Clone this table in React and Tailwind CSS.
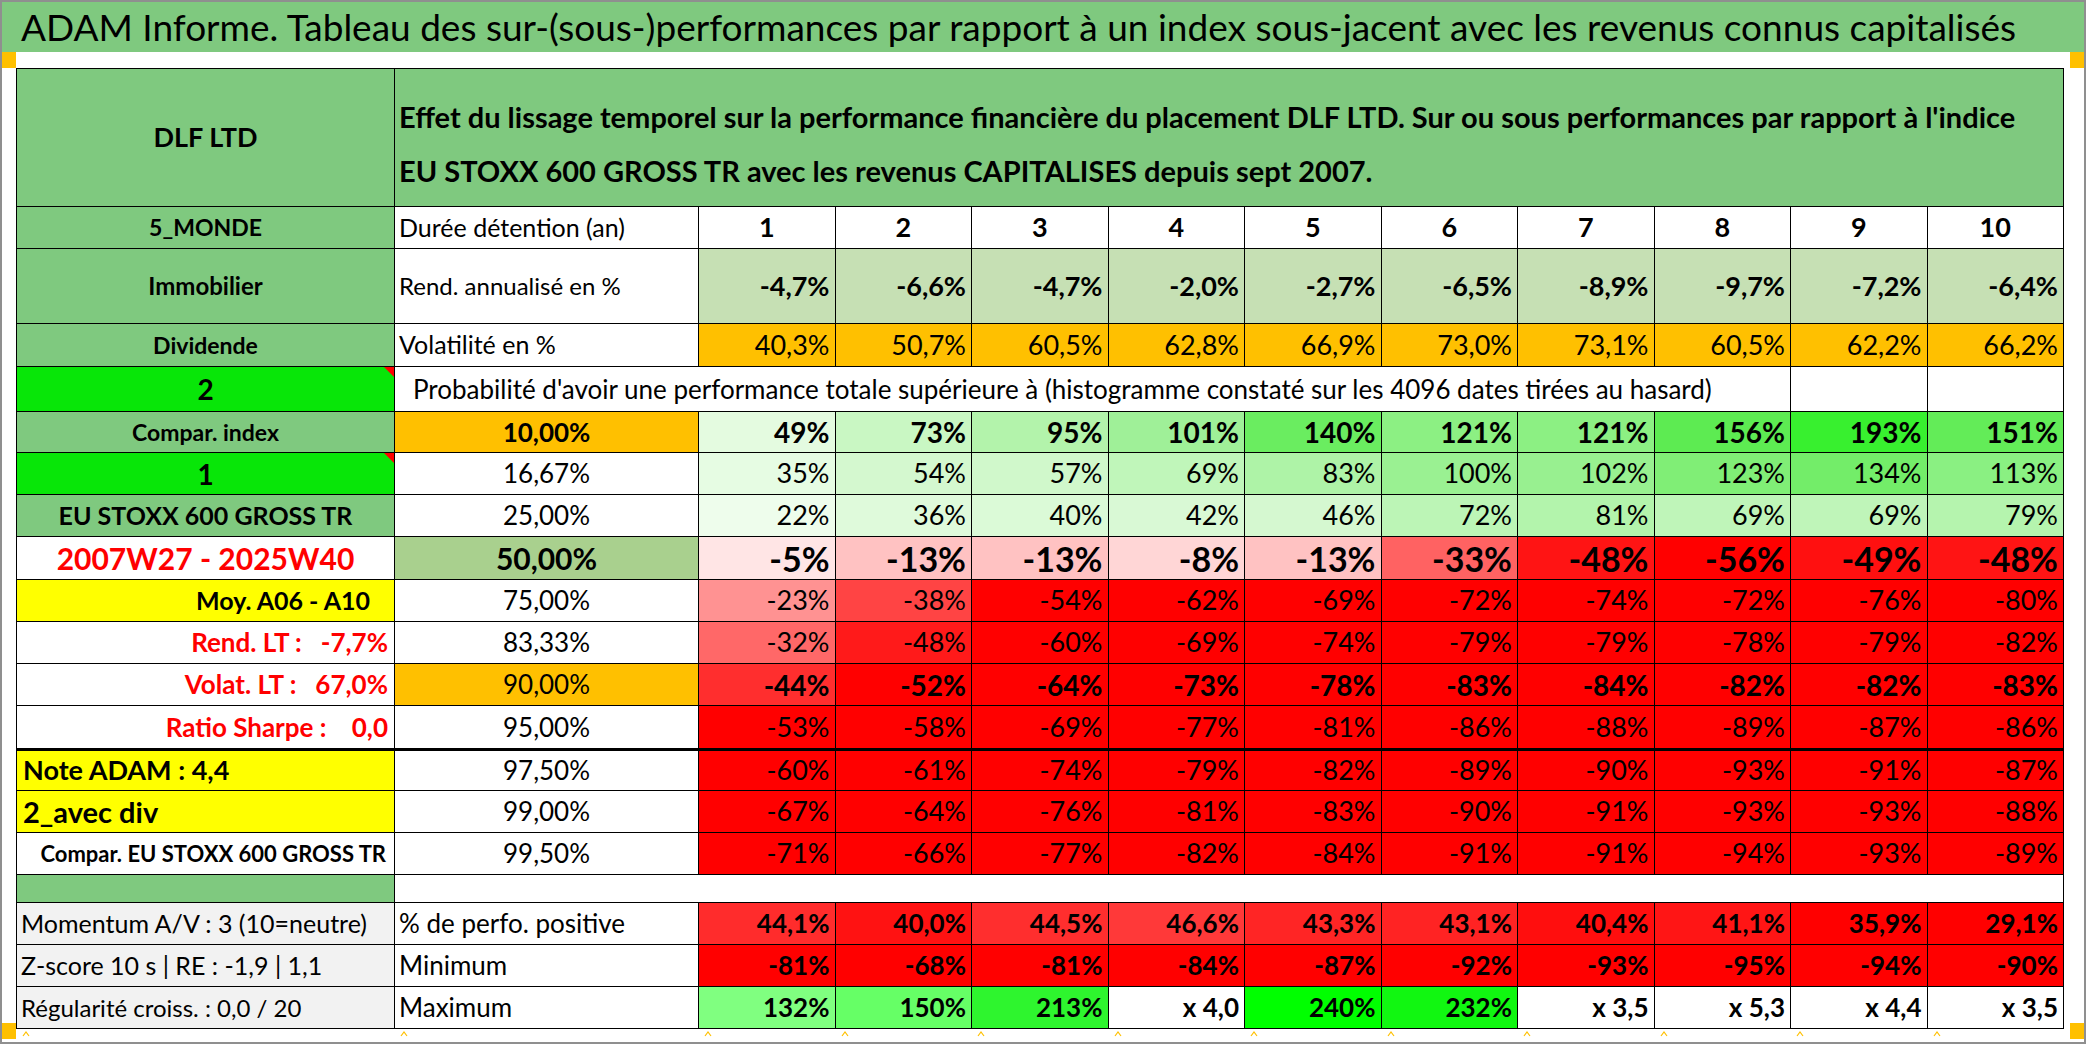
import { twMerge } from "tailwind-merge";

const RED = "bg-[#ff0000]";

// conditional formatting colours copied from the sheet
const rend = ["-4,7%", "-6,6%", "-4,7%", "-2,0%", "-2,7%", "-6,5%", "-8,9%", "-9,7%", "-7,2%", "-6,4%"];
const vola = ["40,3%", "50,7%", "60,5%", "62,8%", "66,9%", "73,0%", "73,1%", "60,5%", "62,2%", "66,2%"];

const rows = [
  {
    a: "Compar. index",
    aCls: "bg-[#7fc97f] justify-center font-bold text-[23px]",
    b: "10,00%",
    bCls: "bg-[#ffc000] font-bold",
    vCls: "font-bold text-[28px]",
    cells: [
      ["49%", "bg-[#e4fbe0]"], ["73%", "bg-[#c9f7c3]"], ["95%", "bg-[#b3f3ab]"], ["101%", "bg-[#9ff098]"], ["140%", "bg-[#6aed60]"],
      ["121%", "bg-[#8cf083]"], ["121%", "bg-[#8cf083]"], ["156%", "bg-[#5deb52]"], ["193%", "bg-[#38f02f]"], ["151%", "bg-[#63ec58]"],
    ],
  },
  {
    a: "1",
    aCls: "bg-[#08e608] justify-center font-bold text-[28px]",
    flag: true,
    b: "16,67%",
    cells: [
      ["35%", "bg-[#e6fce3]"], ["54%", "bg-[#d4f8cf]"], ["57%", "bg-[#d0f8cb]"], ["69%", "bg-[#c0f6ba]"], ["83%", "bg-[#aef3a7]"],
      ["100%", "bg-[#9af192]"], ["102%", "bg-[#98f090]"], ["123%", "bg-[#80ee76]"], ["134%", "bg-[#73ed69]"], ["113%", "bg-[#8af082]"],
    ],
  },
  {
    a: "EU STOXX 600 GROSS TR",
    aCls: "bg-[#7fc97f] justify-center font-bold text-[25px]",
    b: "25,00%",
    cells: [
      ["22%", "bg-[#eefdec]"], ["36%", "bg-[#dffadb]"], ["40%", "bg-[#dbfad7]"], ["42%", "bg-[#d9f9d5]"], ["46%", "bg-[#d5f8d0]"],
      ["72%", "bg-[#bcf5b6]"], ["81%", "bg-[#b3f4ac]"], ["69%", "bg-[#bff5b9]"], ["69%", "bg-[#bff5b9]"], ["79%", "bg-[#b5f4ae]"],
    ],
  },
  {
    a: "2007W27 - 2025W40",
    aCls: "justify-center font-bold text-[30px] text-[#ff0000]",
    b: "50,00%",
    bCls: "bg-[#a9d08e] font-bold text-[30px]",
    vCls: "font-bold text-[34px]",
    cells: [
      ["-5%", "bg-[#ffe5e5]"], ["-13%", "bg-[#ffc2c2]"], ["-13%", "bg-[#ffc2c2]"], ["-8%", "bg-[#ffd6d6]"], ["-13%", "bg-[#ffc2c2]"],
      ["-33%", "bg-[#ff6262]"], ["-48%", "bg-[#ff1414]"], ["-56%", RED], ["-49%", "bg-[#ff1010]"], ["-48%", "bg-[#ff1414]"],
    ],
  },
  {
    a: "Moy. A06 - A10",
    aCls: "bg-[#ffff00] justify-end pr-[24px] font-bold text-[25px]",
    b: "75,00%",
    cells: [
      ["-23%", "bg-[#ff9292]"], ["-38%", "bg-[#ff4444]"], ["-54%", RED], ["-62%", RED], ["-69%", RED],
      ["-72%", RED], ["-74%", RED], ["-72%", RED], ["-76%", RED], ["-80%", RED],
    ],
  },
  {
    a: "Rend. LT :   -7,7%",
    aCls: "justify-end pr-[6px] font-bold text-[26px] text-[#ff0000]",
    b: "83,33%",
    cells: [
      ["-32%", "bg-[#ff6868]"], ["-48%", "bg-[#ff1a1a]"], ["-60%", RED], ["-69%", RED], ["-74%", RED],
      ["-79%", RED], ["-79%", RED], ["-78%", RED], ["-79%", RED], ["-82%", RED],
    ],
  },
  {
    a: "Volat. LT :   67,0%",
    aCls: "justify-end pr-[6px] font-bold text-[26px] text-[#ff0000]",
    b: "90,00%",
    bCls: "bg-[#ffc000]",
    vCls: "font-bold text-[28px]",
    cells: [
      ["-44%", "bg-[#ff2e2e]"], ["-52%", RED], ["-64%", RED], ["-73%", RED], ["-78%", RED],
      ["-83%", RED], ["-84%", RED], ["-82%", RED], ["-82%", RED], ["-83%", RED],
    ],
  },
  {
    a: "Ratio Sharpe :    0,0",
    aCls: "justify-end pr-[6px] font-bold text-[26px] text-[#ff0000]",
    b: "95,00%",
    cells: ["-53%", "-58%", "-69%", "-77%", "-81%", "-86%", "-88%", "-89%", "-87%", "-86%"].map((v) => [v, RED]),
  },
  {
    a: "Note ADAM : 4,4",
    aCls: "bg-[#ffff00] justify-start pl-[6px] font-bold text-[27px]",
    b: "97,50%",
    thick: true,
    cells: ["-60%", "-61%", "-74%", "-79%", "-82%", "-89%", "-90%", "-93%", "-91%", "-87%"].map((v) => [v, RED]),
  },
  {
    a: "2_avec div",
    aCls: "bg-[#ffff00] justify-start pl-[6px] font-bold text-[29px]",
    b: "99,00%",
    cells: ["-67%", "-64%", "-76%", "-81%", "-83%", "-90%", "-91%", "-93%", "-93%", "-88%"].map((v) => [v, RED]),
  },
  {
    a: "Compar. EU STOXX 600 GROSS TR",
    aCls: "justify-end pr-[8px] font-bold text-[22px]",
    b: "99,50%",
    cells: ["-71%", "-66%", "-77%", "-82%", "-84%", "-91%", "-91%", "-94%", "-93%", "-89%"].map((v) => [v, RED]),
  },
];

const stats = [
  {
    a: "Momentum A/V : 3 (10=neutre)",
    aCls: "text-[25px]",
    b: "% de perfo. positive",
    cells: [
      ["44,1%", "bg-[#ff2c2c]"], ["40,0%", "bg-[#ff1212]"], ["44,5%", "bg-[#ff2e2e]"], ["46,6%", "bg-[#ff3939]"], ["43,3%", "bg-[#ff2525]"],
      ["43,1%", "bg-[#ff2323]"], ["40,4%", "bg-[#ff0e0e]"], ["41,1%", "bg-[#ff1515]"], ["35,9%", RED], ["29,1%", RED],
    ],
  },
  {
    a: "Z-score 10 s | RE : -1,9 | 1,1",
    aCls: "text-[25px]",
    b: "Minimum",
    cells: ["-81%", "-68%", "-81%", "-84%", "-87%", "-92%", "-93%", "-95%", "-94%", "-90%"].map((v) => [v, RED]),
  },
  {
    a: "Régularité croiss. : 0,0 / 20",
    aCls: "text-[24px]",
    b: "Maximum",
    cells: [
      ["132%", "bg-[#80ff80]"], ["150%", "bg-[#66ff66]"], ["213%", "bg-[#2ef52e]"], ["x 4,0", "bg-white"], ["240%", "bg-[#00ff00]"],
      ["232%", "bg-[#11f711]"], ["x 3,5", "bg-white"], ["x 5,3", "bg-white"], ["x 4,4", "bg-white"], ["x 3,5", "bg-white"],
    ],
  },
];

function Cell({ className = "", children }) {
  return (
    <div className={twMerge("relative flex items-center overflow-hidden whitespace-pre bg-white text-[27px] text-black", className)}>
      {children}
    </div>
  );
}

function Flag() {
  return <span className="absolute right-0 top-0 h-0 w-0 border-l-[10px] border-t-[10px] border-l-transparent border-t-[#ff0000]" />;
}

function Num({ className, children }) {
  return <Cell className={twMerge("justify-end pr-[5px]", className)}>{children}</Cell>;
}

function Square() {
  return <div className="h-[16px] w-[14px] bg-[#ffc000]" />;
}

function Caret() {
  return (
    <svg width="8" height="6" viewBox="0 0 8 6" className="ml-[6px] mt-[2px]">
      <path d="M1 5 L4 1 L7 5" fill="none" stroke="#ffc000" strokeWidth="1.2" />
    </svg>
  );
}

export default function App() {
  return (
    <div className="h-[1044px] w-[2086px] overflow-hidden border-2 border-[#8f8f8f] bg-white font-['Lato',sans-serif] text-black">
      <div className="flex h-[50px] items-center bg-[#7fc97f] pl-[19px] text-[37px]">
        ADAM Informe. Tableau des sur-(sous-)performances par rapport à un index sous-jacent avec les revenus connus capitalisés
      </div>

      <div className="flex">
        <div className="flex w-[14px] flex-col justify-between">
          <Square />
          <Square />
        </div>

        <div className="flex flex-col">
          <div className="h-[16px]" />
          <div className="grid grid-cols-[377px_303px_repeat(10,135.5px)] grid-rows-[137px_41px_74px_42px_44px_40px_41px_41px_42px_41px_41px_41px_42px_41px_41px_41px_27px_41px_41px_41px] gap-px bg-black p-px">
            {/* header */}
            <Cell className="justify-center bg-[#7fc97f] text-[27px] font-bold">DLF LTD</Cell>
            <Cell className="col-span-11 bg-[#7fc97f] pl-[4px] pt-[12px] text-[29px] font-bold leading-[54px]">
              <div>
                Effet du lissage temporel sur la performance financière du placement DLF LTD. Sur ou sous performances par rapport à l'indice
                <br />
                EU STOXX 600 GROSS TR avec les revenus CAPITALISES depuis sept 2007.
              </div>
            </Cell>

            <Cell className="justify-center bg-[#7fc97f] text-[23px] font-bold">5_MONDE</Cell>
            <Cell className="pl-[4px] text-[25px]">Durée détention (an)</Cell>
            {[1, 2, 3, 4, 5, 6, 7, 8, 9, 10].map((n) => (
              <Cell key={n} className="justify-center text-[27px] font-bold">{n}</Cell>
            ))}

            <Cell className="justify-center bg-[#7fc97f] text-[24px] font-bold">Immobilier</Cell>
            <Cell className="pl-[4px] text-[24px]">Rend. annualisé en %</Cell>
            {rend.map((v, i) => (
              <Num key={i} className="bg-[#c6e0b4] font-bold">{v}</Num>
            ))}

            <Cell className="justify-center bg-[#7fc97f] text-[23px] font-bold">Dividende</Cell>
            <Cell className="pl-[4px] text-[25px]">Volatilité en %</Cell>
            {vola.map((v, i) => (
              <Num key={i} className="bg-[#ffc000]">{v}</Num>
            ))}

            <Cell className="justify-center bg-[#08e608] text-[28px] font-bold">
              2
              <Flag />
            </Cell>
            <Cell className="col-span-9 pl-[18px] text-[26px]">
              Probabilité d'avoir une performance totale supérieure à (histogramme constaté sur les 4096 dates tirées au hasard)
            </Cell>
            <Cell />
            <Cell />

            {rows.map((r) => (
              <div key={r.a} className="contents">
                <Cell className={twMerge(r.aCls, r.thick && "border-t-2 border-black")}>
                  {r.a}
                  {r.flag && <Flag />}
                </Cell>
                <Cell className={twMerge("justify-center text-[26px]", r.bCls, r.thick && "border-t-2 border-black")}>{r.b}</Cell>
                {r.cells.map(([v, bg], i) => (
                  <Num key={i} className={twMerge(bg, r.vCls, r.thick && "border-t-2 border-black")}>{v}</Num>
                ))}
              </div>
            ))}

            <Cell className="bg-[#7fc97f]" />
            <Cell className="col-span-11" />

            {stats.map((r) => (
              <div key={r.a} className="contents">
                <Cell className={twMerge("bg-[#f2f2f2] pl-[4px]", r.aCls)}>{r.a}</Cell>
                <Cell className="pl-[4px] text-[26px]">{r.b}</Cell>
                {r.cells.map(([v, bg], i) => (
                  <Num key={i} className={twMerge(bg, "text-[26px] font-bold")}>{v}</Num>
                ))}
              </div>
            ))}
          </div>
          <div className="grid h-[10px] grid-cols-[378px_304px_repeat(10,136.5px)]">
            {Array.from({ length: 12 }).map((_, i) => (
              <div key={i}>
                <Caret />
              </div>
            ))}
          </div>
        </div>

        <div className="flex flex-1 flex-col items-end justify-between">
          <Square />
          <Square />
        </div>
      </div>
    </div>
  );
}
